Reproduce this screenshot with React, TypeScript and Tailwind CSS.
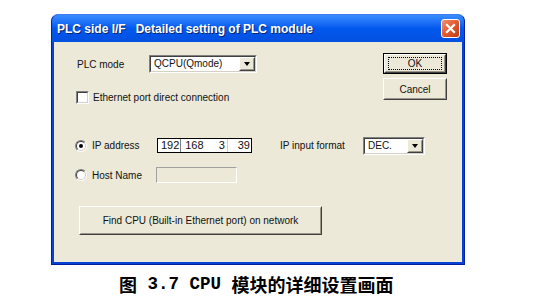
import React from "react"

const ui = { fontFamily: '"Liberation Sans Narrow", "Liberation Sans", Arial, sans-serif' }

function Raised({ className = "", children }: { className?: string; children?: React.ReactNode }) {
  return (
    <div className={`shrink-0 border border-t-white border-l-white border-r-[#404040] border-b-[#404040] bg-[#ECE9D8] ${className}`}>
      <div className="w-full h-full border border-t-[#ECE9D8] border-l-[#ECE9D8] border-r-[#9a978a] border-b-[#9a978a] flex items-center justify-center">
        {children}
      </div>
    </div>
  )
}

function Combo({ value, width }: { value: string; width: string }) {
  return (
    <div className={`${width} shrink-0 h-[18px] flex border border-t-[#808080] border-l-[#808080] border-r-white border-b-white`}>
      <div className="flex-1 flex border border-t-[#404040] border-l-[#404040] border-r-[#d4d0c8] border-b-[#d4d0c8] bg-white">
        <span className="flex-1 pl-[3px] leading-[14px]">{value}</span>
        <Raised className="w-[16px] h-full">
          <span className="block w-0 h-0 border-l-[3.5px] border-r-[3.5px] border-t-[4px] border-l-transparent border-r-transparent border-t-black" />
        </Raised>
      </div>
    </div>
  )
}

function Radio({ checked }: { checked?: boolean }) {
  return (
    <span className="shrink-0 w-[12px] h-[12px] rounded-full border border-t-[#808080] border-l-[#808080] border-r-white border-b-white flex items-center justify-center">
      <span className="w-[10px] h-[10px] rounded-full bg-white border border-t-[#404040] border-l-[#404040] border-r-[#d4d0c8] border-b-[#d4d0c8] flex items-center justify-center">
        {checked && <span className="w-[4px] h-[4px] rounded-full bg-black" />}
      </span>
    </span>
  )
}

export default function App() {
  return (
    <div className="w-[537px] h-[302px] bg-white overflow-hidden" style={ui}>
      <div className="ml-[51px] mt-[14px] w-[414px] h-[251px] flex flex-col bg-[#0842d4] rounded-t-[7px] border border-[#0020a0] border-t-[#3d7cf0]">
        {/* title bar */}
        <div className="h-[27px] flex items-center justify-between pl-[5px] pr-[4px] rounded-t-[6px] bg-gradient-to-b from-[#3a8cff] via-[#0058ee] to-[#0450e0]">
          <span className="text-white font-bold text-[12px] [text-shadow:1px_1px_0_#0a246a]" style={{ fontFamily: '"Liberation Sans", Arial, sans-serif' }}>
            PLC side I/F&nbsp;&nbsp;&nbsp;Detailed setting of PLC module
          </span>
          <div className="w-[19px] h-[19px] rounded-[3px] border border-white bg-gradient-to-br from-[#f09070] via-[#e05a30] to-[#c03a14] flex items-center justify-center">
            <svg width="11" height="11" viewBox="0 0 11 11">
              <path d="M2 2 L9 9 M9 2 L2 9" stroke="white" strokeWidth="2.2" strokeLinecap="square" />
            </svg>
          </div>
        </div>
        {/* client */}
        <div className="flex-1 mx-[2px] mb-[2px] bg-[#ECE9D8] flex text-[10px] text-[#111]">
          <div className="flex-1 min-w-0 flex flex-col">
            <div className="mt-[13px] h-[18px] flex items-center pl-[23px]">
              <span className="w-[72px] shrink-0">PLC mode</span>
              <Combo value="QCPU(Qmode)" width="w-[108px]" />
            </div>
            <div className="mt-[18px] h-[13px] flex items-center pl-[22px] gap-[4px]">
              <span className="shrink-0 w-[13px] h-[13px] border border-t-[#808080] border-l-[#808080] border-r-white border-b-white">
                <span className="block w-full h-full bg-white border border-t-[#404040] border-l-[#404040] border-r-[#d4d0c8] border-b-[#d4d0c8]" />
              </span>
              <span className="whitespace-nowrap">Ethernet port direct connection</span>
            </div>
            <div className="mt-[33px] h-[17px] flex items-center pl-[21px]">
              <Radio checked />
              <span className="ml-[5px] w-[65px] shrink-0">IP address</span>
              <div className="w-[95px] shrink-0 h-[15px] border border-black bg-white grid grid-cols-4 text-[11px] leading-[13px]">
                <span className="text-right pr-[1px] border-r border-[#808080]">192</span>
                <span className="text-left pl-[4px]">168</span>
                <span className="text-right pr-[2px] border-r border-[#d0d0d0]">3</span>
                <span className="text-right pr-[1px]">39</span>
              </div>
              <span className="ml-[28px] w-[83px] shrink-0 whitespace-nowrap">IP input format</span>
              <Combo value="DEC." width="w-[62px]" />
            </div>
            <div className="mt-[13px] h-[16px] flex items-center pl-[21px]">
              <Radio />
              <span className="ml-[5px] w-[64px] shrink-0">Host Name</span>
              <div className="w-[81px] shrink-0 h-[16px] border border-t-[#a0a0a0] border-l-[#a0a0a0] border-r-white border-b-white bg-[#ECE9D8]" />
            </div>
            <div className="mt-[23px] pl-[25px] flex">
              <Raised className="w-[243px] h-[29px]">
                <span className="whitespace-nowrap">Find CPU (Built-in Ethernet port) on network</span>
              </Raised>
            </div>
          </div>
          <div className="w-[64px] shrink-0 mr-[15px] pt-[11px] flex flex-col gap-[4px]">
            <div className="h-[21px] border border-black flex">
              <Raised className="w-full h-full">
                <span className="w-[54px] h-[13px] flex items-center justify-center border border-dotted border-black">OK</span>
              </Raised>
            </div>
            <Raised className="h-[22px]">
              <span>Cancel</span>
            </Raised>
          </div>
        </div>
      </div>
      <div className="mt-[7px] pl-[119px] flex items-center text-[18px] font-bold text-black leading-[24px]" style={{ fontFamily: '"Noto Sans CJK SC", sans-serif' }}>
        <span>图</span>
        <span className="text-[17.5px] whitespace-pre" style={{ fontFamily: '"Liberation Mono", monospace' }}> 3.7 CPU </span>
        <span>模块的详细设置画面</span>
      </div>
    </div>
  )
}
